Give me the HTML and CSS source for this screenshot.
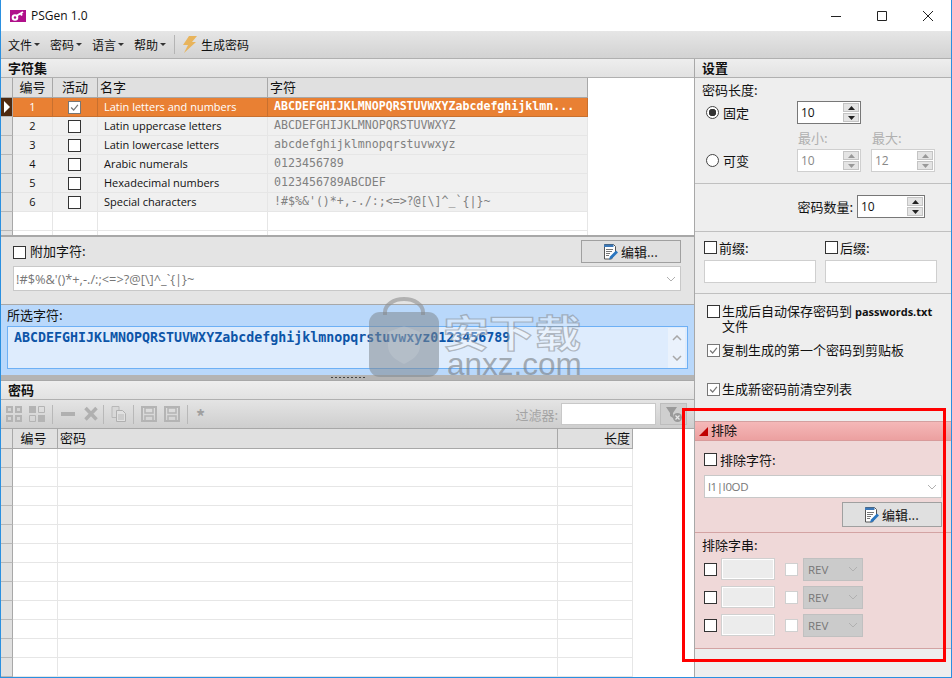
FILE: index.html
```html
<!DOCTYPE html>
<html lang="zh-CN">
<head>
    <meta charset="UTF-8">
    <title>PSGen 1.0</title>
    <link rel="stylesheet" href="styles.css">
</head>
<body>
    <svg class="sprite" width="0" height="0">
        <symbol id="i-edit" viewBox="0 0 16 16">
            <path d="M2.500.5h9l2 2v6l-4 6.500h-7z" fill="#fff" stroke="#555"/>
            <path d="M2 .5h9.500v2.500h-9.500z" fill="#3b78b8"/>
            <path d="M4 5.500h7M4 7.500h6M4 9.500h4M4 11.500h3" stroke="#777" fill="none"/>
            <path d="M7 15.500l1-3 6-6 2 2-6 6z" fill="#2a76c0"/>
        </symbol>
        <symbol id="i-save" viewBox="0 0 16 16">
            <path d="M1 1h14v14h-14z" fill="none" stroke="#b4b4b4" stroke-width="2"/>
            <path d="M4 2h8v5h-8zM4 10h8v5h-8z" fill="none" stroke="#b4b4b4" stroke-width="1.500"/>
        </symbol>
        <symbol id="i-up" viewBox="0 0 7 4"><path d="M3.500 0l3.500 4h-7z"/></symbol>
        <symbol id="i-down" viewBox="0 0 7 4"><path d="M0 0h7l-3.500 4z"/></symbol>
        <symbol id="i-check" viewBox="0 0 13 13"><path d="M2.500 6.500l3 3 5-6" fill="none" stroke="#777" stroke-width="1.500"/></symbol>
        <symbol id="i-chev" viewBox="0 0 10 6"><path d="M1 1l4 4 4-4" fill="none" stroke="#b0b0b0"/></symbol>
    </svg>

    <div class="app">
        <div class="titlebar">
            <svg class="logo" viewBox="0 0 16 12">
                <rect width="16" height="12" fill="#b0108a"/>
                <circle cx="5" cy="7.500" r="2.300" fill="none" stroke="#fff" stroke-width="2"/>
                <path d="M7 5.500l6-3.500M10.500 3.500l1.500 2" stroke="#fff" stroke-width="2" fill="none"/>
            </svg>
            <span class="title-text">PSGen 1.0</span>
            <div class="win-btns">
                <span class="win-btn"><svg width="12" height="12" viewBox="0 0 12 12"><path d="M1 6.500h10" stroke="#222"/></svg></span>
                <span class="win-btn"><svg width="12" height="12" viewBox="0 0 12 12"><path d="M1.500 1.500h9v9h-9z" fill="none" stroke="#222"/></svg></span>
                <span class="win-btn"><svg width="12" height="12" viewBox="0 0 12 12"><path d="M1 1l10 10M11 1l-10 10" stroke="#222"/></svg></span>
            </div>
        </div>

        <div class="toolbar">
            <span class="menu">文件<i class="caret"></i></span>
            <span class="menu">密码<i class="caret"></i></span>
            <span class="menu">语言<i class="caret"></i></span>
            <span class="menu">帮助<i class="caret"></i></span>
            <span class="tool-sep"></span>
            <svg class="bolt" viewBox="0 0 15 17"><path d="M7 0h8l-5 6h4l-12 11 4-8h-5z" fill="#e8b45c"/></svg>
            <span class="tool-gen">生成密码</span>
        </div>

        <div class="main">
            <div class="left">
                <div class="sect-head">字符集</div>
                <div class="grid-wrap charset">
                    <table class="grid">
                        <colgroup><col class="c-ind"><col class="c-no"><col class="c-act"><col class="c-name"><col class="c-chars"></colgroup>
                        <tr class="head"><th></th><th class="mid">编号</th><th class="mid">活动</th><th>名字</th><th>字符</th></tr>
                        <tr class="row sel"><td class="ind"><i class="arrow"></i></td><td class="mid">1</td><td class="mid"><span class="cb on"><svg><use href="#i-check"/></svg></span></td><td>Latin letters and numbers</td><td class="mono">ABCDEFGHIJKLMNOPQRSTUVWXYZabcdefghijklmn...</td></tr>
                        <tr class="row"><td class="ind"></td><td class="mid">2</td><td class="mid"><span class="cb"></span></td><td>Latin uppercase letters</td><td class="mono">ABCDEFGHIJKLMNOPQRSTUVWXYZ</td></tr>
                        <tr class="row"><td class="ind"></td><td class="mid">3</td><td class="mid"><span class="cb"></span></td><td>Latin lowercase letters</td><td class="mono">abcdefghijklmnopqrstuvwxyz</td></tr>
                        <tr class="row"><td class="ind"></td><td class="mid">4</td><td class="mid"><span class="cb"></span></td><td>Arabic numerals</td><td class="mono">0123456789</td></tr>
                        <tr class="row"><td class="ind"></td><td class="mid">5</td><td class="mid"><span class="cb"></span></td><td>Hexadecimal numbers</td><td class="mono">0123456789ABCDEF</td></tr>
                        <tr class="row"><td class="ind"></td><td class="mid">6</td><td class="mid"><span class="cb"></span></td><td>Special characters</td><td class="mono">!#$%&amp;'()*+,-./:;&lt;=&gt;?@[\]^_`{|}~</td></tr>
                        <tr class="blank"><td class="ind"></td><td></td><td></td><td></td><td></td></tr>
                        <tr class="blank"><td class="ind"></td><td></td><td></td><td></td><td></td></tr>
                    </table>
                </div>

                <div class="extra">
                    <div class="extra-top">
                        <label class="check"><span class="cb"></span>附加字符:</label>
                        <span class="btn"><svg class="btn-ico"><use href="#i-edit"/></svg>编辑...</span>
                    </div>
                    <div class="combo"><span>!#$%&amp;'()*+,-./:;&lt;=&gt;?@[\]^_`{|}~</span><svg class="chev"><use href="#i-chev"/></svg></div>
                </div>

                <div class="selected">
                    <div class="selected-label">所选字符:</div>
                    <div class="selected-box">
                        <span class="selected-text">ABCDEFGHIJKLMNOPQRSTUVWXYZabcdefghijklmnopqrstuvwxyz0123456789</span>
                        <div class="scroll">
                            <svg width="10" height="6" viewBox="0 0 10 6"><path d="M1 5l4-4 4 4" fill="none" stroke="#a8a8a8" stroke-width="1.500"/></svg>
                            <svg width="10" height="6" viewBox="0 0 10 6"><path d="M1 1l4 4 4-4" fill="none" stroke="#a8a8a8" stroke-width="1.500"/></svg>
                        </div>
                    </div>
                </div>

                <div class="splitter"><span class="dots"></span></div>

                <div class="sect-head pw-head">密码</div>
                <div class="pw-tools">
                    <svg class="ti" viewBox="0 0 16 16"><path d="M0 0h7v7h-7zM9 0h7v7h-7zM0 9h7v7h-7zM9 9h7v7h-7z" fill="#b4b4b4"/><path d="M2 2h3v3h-3zM11 2h3v3h-3zM2 11h3v3h-3zM11 11h3v3h-3z" fill="#d4d4d4"/></svg>
                    <svg class="ti" viewBox="0 0 16 16"><path d="M0 0h7v7h-7zM9 9h7v7h-7z" fill="#b4b4b4"/><path d="M9.500.5h6v6h-6zM.5 9.500h6v6h-6z" fill="none" stroke="#b4b4b4"/></svg>
                    <span class="ts"></span>
                    <svg class="ti" viewBox="0 0 16 16"><path d="M1 6h14v4h-14z" fill="#b0b0b0"/></svg>
                    <svg class="ti" viewBox="0 0 16 16"><path d="M2.500 2l11 11.500M13.500 2l-11 11.500" stroke="#b0b0b0" stroke-width="3.500"/></svg>
                    <span class="ts ts-a"></span>
                    <svg class="ti" viewBox="0 0 16 16"><path d="M1 .5h7v11h-7z" fill="#d8d8d8" stroke="#b8b8b8"/><path d="M5.500 4.500h6l3 3v8h-9z" fill="#e0e0e0" stroke="#b0b0b0"/><path d="M7 9h6M7 11h6M7 13h6" stroke="#b8b8b8"/></svg>
                    <span class="ts ts-b"></span>
                    <svg class="ti"><use href="#i-save"/></svg>
                    <svg class="ti"><use href="#i-save"/></svg>
                    <span class="ts"></span>
                    <span class="star">*</span>
                    <span class="filter-label">过滤器:</span>
                    <span class="filter-input"></span>
                    <span class="filter-btn"><svg width="18" height="18" viewBox="0 0 18 18"><path d="M1 2h11l-4 6v5l-3-2v-3z" fill="#9a9a9a"/><circle cx="12.500" cy="12.500" r="4.500" fill="#9a9a9a"/><path d="M10.500 10.500l4 4M14.500 10.500l-4 4" stroke="#e8e8e8" stroke-width="1.200"/></svg></span>
                </div>
                <div class="pw-grid">
                    <table class="grid pw">
                        <colgroup><col class="c-ind"><col class="c-pno"><col class="c-pw"><col class="c-len"></colgroup>
                        <tr class="head"><th></th><th class="mid">编号</th><th>密码</th><th class="end">长度</th></tr>
                        <tr class="blank"><td class="ind"></td><td></td><td></td><td></td></tr>
                        <tr class="blank"><td class="ind"></td><td></td><td></td><td></td></tr>
                        <tr class="blank"><td class="ind"></td><td></td><td></td><td></td></tr>
                        <tr class="blank"><td class="ind"></td><td></td><td></td><td></td></tr>
                        <tr class="blank"><td class="ind"></td><td></td><td></td><td></td></tr>
                        <tr class="blank"><td class="ind"></td><td></td><td></td><td></td></tr>
                        <tr class="blank"><td class="ind"></td><td></td><td></td><td></td></tr>
                        <tr class="blank"><td class="ind"></td><td></td><td></td><td></td></tr>
                        <tr class="blank"><td class="ind"></td><td></td><td></td><td></td></tr>
                        <tr class="blank"><td class="ind"></td><td></td><td></td><td></td></tr>
                        <tr class="blank"><td class="ind"></td><td></td><td></td><td></td></tr>
                        <tr class="blank"><td class="ind"></td><td></td><td></td><td></td></tr>
                    </table>
                </div>
            </div>

            <div class="right">
                <div class="sect-head">设置</div>

                <div class="opt length">
                    <div class="length-label">密码长度:</div>
                    <div class="length-grid">
                        <label class="radio-row"><span class="radio on"></span>固定</label>
                        <span class="spin"><b>10</b><span class="spin-btns"><i><svg><use href="#i-up"/></svg></i><i><svg><use href="#i-down"/></svg></i></span></span>
                        <span></span>
                        <span></span>
                        <span class="faint">最小:</span>
                        <span class="faint">最大:</span>
                        <label class="radio-row"><span class="radio"></span>可变</label>
                        <span class="spin off"><b>10</b><span class="spin-btns"><i><svg><use href="#i-up"/></svg></i><i><svg><use href="#i-down"/></svg></i></span></span>
                        <span class="spin off"><b>12</b><span class="spin-btns"><i><svg><use href="#i-up"/></svg></i><i><svg><use href="#i-down"/></svg></i></span></span>
                    </div>
                </div>

                <div class="opt count">
                    <span>密码数量:</span>
                    <span class="spin wide"><b>10</b><span class="spin-btns"><i><svg><use href="#i-up"/></svg></i><i><svg><use href="#i-down"/></svg></i></span></span>
                </div>

                <div class="opt affix">
                    <div class="affix-col">
                        <label class="check"><span class="cb"></span>前缀:</label>
                        <span class="text-in"></span>
                    </div>
                    <div class="affix-col">
                        <label class="check"><span class="cb"></span>后缀:</label>
                        <span class="text-in"></span>
                    </div>
                </div>

                <div class="opt flags">
                    <div class="flag flag-save"><span class="cb"></span><span>生成后自动保存密码到 <strong>passwords.txt</strong><br>文件</span></div>
                    <div class="flag flag-copy"><span class="cb on"><svg><use href="#i-check"/></svg></span><span>复制生成的第一个密码到剪贴板</span></div>
                    <div class="flag flag-clear"><span class="cb on"><svg><use href="#i-check"/></svg></span><span>生成新密码前清空列表</span></div>
                </div>

                <div class="excl-head"><i class="excl-tri"></i><span>排除</span></div>
                <div class="excl">
                    <div class="excl-chars">
                        <label class="check"><span class="cb"></span>排除字符:</label>
                        <div class="combo"><span>l1|I0OD</span><svg class="chev"><use href="#i-chev"/></svg></div>
                        <div class="excl-btn-row"><span class="btn"><svg class="btn-ico"><use href="#i-edit"/></svg>编辑...</span></div>
                    </div>
                    <div class="excl-str">
                        <div class="excl-str-label">排除字串:</div>
                        <div class="rev-row"><span class="cb"></span><span class="rev-in"></span><span class="cb faded"></span><span class="rev-sel">REV<svg class="chev"><use href="#i-chev"/></svg></span></div>
                        <div class="rev-row"><span class="cb"></span><span class="rev-in"></span><span class="cb faded"></span><span class="rev-sel">REV<svg class="chev"><use href="#i-chev"/></svg></span></div>
                        <div class="rev-row"><span class="cb"></span><span class="rev-in"></span><span class="cb faded"></span><span class="rev-sel">REV<svg class="chev"><use href="#i-chev"/></svg></span></div>
                    </div>
                </div>
            </div>
        </div>

        <!-- watermark + annotation sit on top of everything -->
        <div class="wm">
            <svg class="wm-bag" viewBox="0 0 72 82">
                <path d="M17 18v-3a19 13 0 0 1 38 0v3" fill="none" stroke="#8f8f8f" stroke-opacity=".6" stroke-width="4"/>
                <rect x="1" y="15" width="70" height="65" rx="11" fill="#808890" fill-opacity=".55"/>
                <path d="M20 35l16-6 16 6v14c0 9-8 14-16 18-8-4-16-9-16-18z" fill="#fff" fill-opacity=".12"/>
            </svg>
            <span class="wm-cn">安下载</span>
            <span class="wm-en">anxz.com</span>
        </div>
        <div class="redbox"></div>
    </div>
</body>
</html>
```

FILE: styles.css
```css
* {
    box-sizing: border-box;
}

html, body {
    margin: 0;
    padding: 0;
    background-color: white;
}

body {
    font-family: "Noto Sans CJK SC", "Noto Sans", sans-serif;
    font-size: 13px;
    color: #111;
}

.sprite {
    position: absolute;
}

.app {
    position: relative;
    width: 952px;
    height: 678px;
    overflow: hidden;
    display: flex;
    flex-direction: column;
    border: 1px solid #2b90e0;
    border-top: none;
}

/* title bar */
.titlebar {
    height: 31px;
    flex: none;
    display: flex;
    align-items: center;
    padding-left: 9px;
    background-color: white;
}

.logo {
    width: 16px;
    height: 12px;
}

.title-text {
    margin-left: 5px;
    font-family: "Open Sans", sans-serif;
    font-size: 12px;
}

.win-btns {
    margin-left: auto;
    display: flex;
}

.win-btn {
    width: 46px;
    height: 31px;
    display: flex;
    align-items: center;
    justify-content: center;
}

/* toolbar */
.toolbar {
    height: 28px;
    flex: none;
    display: flex;
    align-items: center;
    padding-left: 7px;
    font-size: 12px;
    background: linear-gradient(#e6e6e6, #d2d2d2);
    border-bottom: 1px solid #b0b0b0;
}

.menu {
    display: flex;
    align-items: center;
    width: 42px;
}

.menu:nth-child(4) {
    width: 40px;
}

.caret {
    margin-left: 2px;
    border: 3px solid transparent;
    border-top-color: #333;
    border-bottom: none;
}

.tool-sep {
    width: 1px;
    height: 19px;
    background-color: #b4b4b4;
}

.bolt {
    width: 15px;
    height: 17px;
    margin-left: 7px;
}

.tool-gen {
    margin-left: 4px;
}

.main {
    flex: 1;
    min-height: 0;
    display: flex;
}

.left {
    width: 694px;
    flex: none;
    display: flex;
    flex-direction: column;
    background-color: white;
    border-right: 1px solid #a8a8a8;
}

.right {
    flex: 1;
    background-color: #eeeeee;
    display: flex;
    flex-direction: column;
}

.sect-head {
    height: 19px;
    flex: none;
    padding-left: 7px;
    line-height: 18px;
    font-weight: bold;
    font-size: 13px;
    background: linear-gradient(#eeeeee, #e2e2e2);
    border-bottom: 1px solid #b0b0b0;
}

/* data grids */
.grid-wrap.charset {
    height: 159px;
    flex: none;
    overflow: hidden;
    border-bottom: 2px solid #a8a8a8;
}

.grid {
    border-collapse: separate;
    border-spacing: 0;
    table-layout: fixed;
}

.charset .grid {
    width: 587px;
}

.c-ind { width: 12px; }
.c-no { width: 40px; }
.c-act { width: 45px; }
.c-name { width: 170px; }
.c-chars { width: 320px; }
.c-pno { width: 45px; }
.c-pw { width: 500px; }
.c-len { width: 75px; }

.pw {
    width: 632px;
}

.pw th.mid {
    padding-right: 5px;
}

.grid th {
    height: 20px;
    padding: 0 2px 2px;
    font-weight: normal;
    text-align: left;
    line-height: 16px;
    background-color: #e0e0e0;
    border-right: 1px solid #a8a8a8;
    border-bottom: 1px solid #a8a8a8;
}

.grid th.mid,
.grid td.mid {
    text-align: center;
}

.grid th.end {
    text-align: right;
}

.grid td {
    height: 19px;
    padding: 0 0 2px 6px;
    line-height: 15px;
    border-right: 1px solid #e6e6e6;
    border-bottom: 1px solid #e6e6e6;
    white-space: nowrap;
    overflow: hidden;
}

.grid td.mid {
    padding: 0 0 2px;
}

.grid td.mid .cb {
    margin: 1px 2px 0 0;
}

.grid td.ind {
    padding: 0;
    background-color: #e0e0e0;
    border-right: 1px solid #a8a8a8;
    border-bottom: 1px solid #b8b8b8;
}

.row td {
    background-color: #f0f0f0;
    font-family: "Open Sans", sans-serif;
    font-size: 11px;
}

.row td.mono {
    font-family: "DejaVu Sans Mono", monospace;
    font-size: 11.600px;
    color: #808080;
}

.sel td {
    color: white;
    background-color: #e98033;
    border-right-color: #c8702f;
    border-bottom-color: #c8702f;
}

.sel td.mono {
    color: white;
    font-weight: bold;
}

.sel td.ind {
    background-color: #4e2a10;
    border-right-color: #a8a8a8;
}

.arrow {
    display: block;
    margin-left: 3px;
    width: 0;
    border-left: 6px solid white;
    border-top: 6px solid transparent;
    border-bottom: 6px solid transparent;
}

/* check and radio */
.cb {
    display: inline-block;
    flex: none;
    width: 13px;
    height: 13px;
    background-color: white;
    border: 1px solid #333;
    vertical-align: middle;
    line-height: 0;
}

.cb svg {
    width: 11px;
    height: 11px;
}

.cb.on {
    border-color: #777;
}

.cb.faded {
    border-color: #d0d0d0;
}

.check {
    display: flex;
    align-items: center;
    gap: 4px;
}

.extra-top .check {
    margin-top: -2px;
}

.extra-top .cb {
    margin-top: 4px;
}

.radio {
    width: 13px;
    height: 13px;
    border-radius: 50%;
    background-color: white;
    border: 1px solid #444;
    flex: none;
}

.radio.on {
    background: radial-gradient(circle, #333 0 3.500px, white 4px);
}

/* extra chars */
.extra {
    height: 68px;
    flex: none;
    padding: 3px 13px 0 12px;
    background-color: #e4e4e4;
    border-bottom: 1px solid #a8a8a8;
}

.extra-top {
    height: 23px;
    display: flex;
    align-items: center;
    justify-content: space-between;
    margin-bottom: 3px;
}

.btn {
    width: 100px;
    height: 23px;
    display: flex;
    align-items: center;
    padding-left: 20px;
    gap: 3px;
    background-color: #e0e0e0;
    border: 1px solid #a0a0a0;
}

.btn-ico {
    width: 16px;
    height: 16px;
}

.combo {
    height: 25px;
    display: flex;
    align-items: center;
    justify-content: space-between;
    padding: 0 4px 0 2px;
    background-color: white;
    border: 1px solid #c8c8c8;
    font-family: "Open Sans", sans-serif;
    font-size: 12.800px;
    color: #777;
}

.chev {
    width: 10px;
    height: 6px;
}

/* selected chars */
.selected {
    height: 70px;
    flex: none;
    padding: 0 6px 0 6px;
    background-color: #b9d8fb;
}

.selected-label {
    height: 21px;
    line-height: 19px;
}

.selected-box {
    height: 43px;
    padding: 2px 0 0 6px;
    display: flex;
    justify-content: space-between;
    background-color: #deecfd;
    border: 1px solid #6db0f5;
}

.selected-text {
    font-family: "DejaVu Sans Mono", monospace;
    font-weight: bold;
    font-size: 13.300px;
    line-height: 18px;
    color: #0d55a8;
    white-space: nowrap;
}

.scroll {
    width: 17px;
    margin: -1px 2px 0 0;
    display: flex;
    flex-direction: column;
    align-items: center;
    justify-content: space-around;
    background-color: #eaf2fc;
}

.splitter {
    height: 5px;
    flex: none;
    display: flex;
    justify-content: center;
    align-items: center;
    background-color: #b4b4b4;
}

.dots {
    width: 34px;
    height: 1px;
    background: repeating-linear-gradient(90deg, #444 0 2px, transparent 2px 4px);
}

.pw-head {
    border-top: 1px solid #a8a8a8;
    height: 20px;
}

/* password toolbar */
.pw-tools {
    height: 29px;
    flex: none;
    display: flex;
    align-items: center;
    padding-left: 5px;
    gap: 7px;
    background: linear-gradient(#e4e4e4, #cecece);
    border-bottom: 1px solid #a8a8a8;
}

.ti {
    width: 16px;
    height: 16px;
}

.ts {
    width: 1px;
    height: 19px;
    background-color: #b8b8b8;
}

.ts-a {
    margin-left: -3px;
}

.ts-b {
    margin-left: -1px;
}

.star {
    margin-left: 1px;
    padding-top: 4px;
    font-weight: bold;
    font-size: 18px;
    line-height: 18px;
    color: #a0a0a0;
}

.filter-label {
    margin-left: auto;
    color: #a4a4a4;
}

.filter-input {
    width: 95px;
    height: 22px;
    margin-left: -4px;
    background-color: white;
    border: 1px solid #c8c8c8;
}

.filter-btn {
    width: 27px;
    height: 22px;
    margin-right: 7px;
    margin-left: -3px;
    display: flex;
    align-items: center;
    justify-content: center;
    background-color: #cfcfcf;
    border: 1px solid #bdbdbd;
}

.pw-grid {
    flex: 1;
    min-height: 0;
    overflow: hidden;
}

/* settings */
.opt {
    flex: none;
    border-bottom: 1px solid #c0c0c0;
}

.length {
    height: 106px;
    padding: 3px 0 0 7px;
}

.length-label {
    height: 18px;
    line-height: 18px;
}

.length-grid {
    margin-top: 2px;
    padding-left: 4px;
    display: grid;
    grid-template-columns: 91px 74px 64px;
    grid-template-rows: 23px 25px 23px;
    align-items: center;
}

.radio-row {
    display: flex;
    align-items: center;
    gap: 4px;
}

.faint {
    color: #b0b0b0;
    align-self: end;
    padding: 0 0 2px 1px;
    line-height: 18px;
}

.spin {
    display: flex;
    align-items: center;
    width: 64px;
    height: 23px;
    background-color: white;
    border: 1px solid #777;
}

.spin b {
    flex: 1;
    padding-left: 3px;
    font-weight: normal;
    font-family: "Open Sans", sans-serif;
    font-size: 12px;
}

.spin.wide {
    width: 68px;
}

.spin-btns {
    display: flex;
    flex-direction: column;
    gap: 1px;
    margin-right: 1px;
}

.spin-btns i {
    width: 16px;
    height: 9px;
    display: flex;
    align-items: center;
    justify-content: center;
    background-color: #e4e4e4;
    border: 1px solid #c4c4c4;
}

.spin-btns svg {
    width: 7px;
    height: 4px;
    fill: #222;
}

.spin.off {
    border-color: #cfcfcf;
    color: #888;
}

.spin.off svg {
    fill: #999;
}

.count {
    height: 48px;
    padding: 11px 26px 0 0;
    display: flex;
    justify-content: flex-end;
    align-items: flex-start;
    gap: 4px;
    line-height: 23px;
}

.affix {
    height: 62px;
    padding: 6px 14px 0 9px;
    display: flex;
    gap: 9px;
}

.affix-col {
    width: 112px;
    display: flex;
    flex-direction: column;
    gap: 3px;
}

.affix-col .check {
    gap: 2px;
    height: 19px;
}

.text-in {
    height: 23px;
    background-color: white;
    border: 1px solid #cfcfcf;
}

.flags {
    height: 127px;
    padding: 11px 0 0 12px;
    border-bottom: none;
}

.flag {
    display: flex;
    gap: 2px;
    line-height: 14px;
}

.flag-save > span:last-child {
    margin-top: -1px;
}

.flag strong {
    font-family: "Open Sans", sans-serif;
    font-size: 11px;
}

.flag-copy,
.flag-clear {
    align-items: center;
}

.flag-copy > span:last-child,
.flag-clear > span:last-child {
    margin-top: -2px;
}

.flag-copy {
    margin-top: 11px;
}

.flag-clear {
    margin-top: 26px;
}

/* exclude panel */
.excl-head {
    height: 20px;
    flex: none;
    display: flex;
    align-items: center;
    gap: 3px;
    padding-left: 4px;
    background: linear-gradient(#f5b8b8, #eca0a0);
    border-top: 1px solid #d4a0a0;
    border-bottom: 1px solid #d89a9a;
}

.excl-head span {
    margin-top: -3px;
}

.excl-tri {
    width: 0;
    border-left: 9px solid transparent;
    border-bottom: 9px solid #c00000;
}

.excl {
    height: 208px;
    flex: none;
    background-color: #efd8d8;
    border-bottom: 1px solid #d3a3a3;
}

.excl-chars {
    height: 92px;
    padding: 11px 9px 0 9px;
    border-bottom: 1px solid #d3a3a3;
}

.excl-chars .check {
    height: 14px;
    gap: 3px;
}

.excl-chars .combo {
    height: 23px;
    margin-top: 9px;
    padding-left: 3px;
    font-size: 11.500px;
    letter-spacing: -0.4px;
}

.excl-btn-row {
    display: flex;
    justify-content: flex-end;
    margin-top: 4px;
}

.excl-btn-row .btn {
    height: 25px;
}

.excl-str {
    padding: 3px 0 0 7px;
}

.excl-str-label {
    height: 19px;
    line-height: 18px;
}

.rev-row {
    height: 28px;
    display: flex;
    align-items: center;
    padding-left: 2px;
}

.rev-in {
    width: 54px;
    height: 22px;
    margin-left: 4px;
    background-color: #ececec;
    border: 1px solid #d0d0d0;
    box-shadow: inset 0 0 0 1px white;
}

.rev-row .cb.faded {
    margin-left: 10px;
}

.rev-sel {
    width: 60px;
    height: 23px;
    margin-left: 5px;
    padding: 0 4px;
    display: flex;
    align-items: center;
    justify-content: space-between;
    background-color: #cbcbcb;
    border: 1px solid #c0c0c0;
    color: #777;
    font-family: "Open Sans", sans-serif;
    font-size: 11.500px;
}

/* overlays */
.wm {
    position: absolute;
    left: 367px;
    top: 297px;
    width: 220px;
    height: 82px;
    pointer-events: none;
}

.wm-bag {
    position: absolute;
    left: 0;
    top: 0;
    width: 72px;
    height: 82px;
}

.wm-cn {
    position: absolute;
    left: 75px;
    top: 4px;
    font-family: "Noto Sans CJK SC", sans-serif;
    font-size: 46px;
    line-height: 60px;
    font-weight: bold;
    color: rgba(255, 255, 255, 0.35);
    -webkit-text-stroke: 1.500px rgba(130, 135, 140, 0.55);
    white-space: nowrap;
    transform: scaleY(0.82);
}

.wm-en {
    position: absolute;
    left: 79px;
    top: 49px;
    font-family: "Liberation Sans", sans-serif;
    font-size: 31.500px;
    line-height: 36px;
    color: rgba(120, 125, 130, 0.6);
}

.redbox {
    position: absolute;
    left: 681px;
    top: 408px;
    width: 264px;
    height: 254px;
    border: 3px solid #ff0000;
    pointer-events: none;
}
```
